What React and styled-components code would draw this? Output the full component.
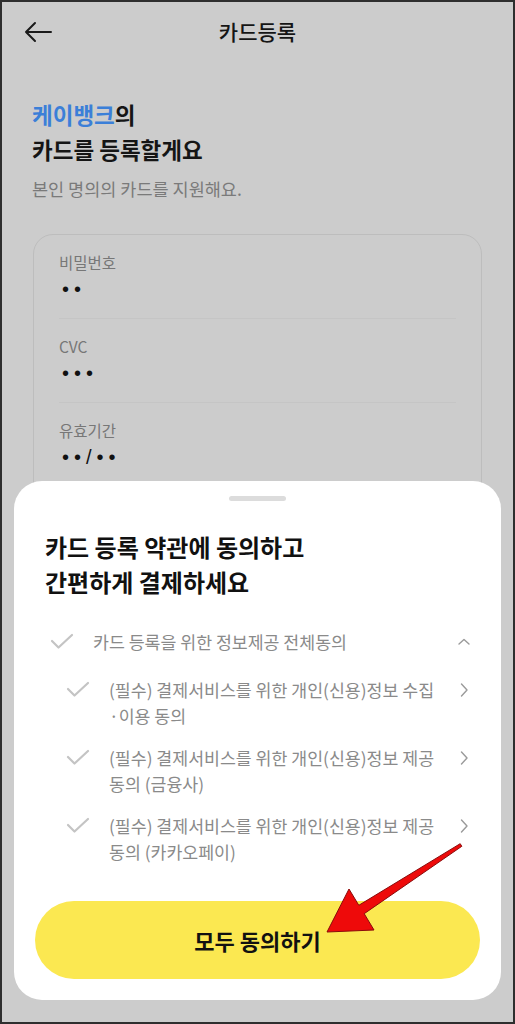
import styled, { createGlobalStyle } from "styled-components";

const GlobalStyle = createGlobalStyle`
  * { box-sizing: border-box; }
  html, body { margin: 0; padding: 0; background: #cccccc; }
  body {
    font-family: "Noto Sans CJK KR", "Noto Sans", sans-serif;
    -webkit-font-smoothing: antialiased;
  }
`;

const Frame = styled.div`
  position: relative;
  width: 515px;
  height: 1024px;
  overflow: hidden;
  background: #cccccc;
  border: 2px solid #2e2e2e;
`;

const Header = styled.header`
  position: relative;
  height: 58px;
  display: flex;
  align-items: center;
  justify-content: center;
`;

const BackButton = styled.button`
  position: absolute;
  left: 20px;
  top: 15px;
  width: 32px;
  height: 30px;
  padding: 0;
  border: 0;
  background: none;
  display: flex;
  align-items: center;
  justify-content: center;
`;

const HeaderTitle = styled.h1`
  margin: 0;
  font-size: 21px;
  font-weight: 500;
  color: #151515;
`;

const Intro = styled.section`
  padding: 37px 30px 0;
`;

const Heading = styled.h2`
  margin: 0;
  font-size: 22.5px;
  line-height: 35px;
  font-weight: 700;
  color: #151515;
`;

const Bank = styled.span`
  color: #3b7fd8;
`;

const Sub = styled.p`
  margin: 11px 0 0;
  font-size: 17.5px;
  line-height: 22px;
  color: #7a7a7a;
`;

const CardBox = styled.div`
  margin: 34px 31px 0 31px;
  border: 1px solid #bdbdbd;
  border-radius: 20px;
  padding: 0 25px 120px;
`;

const Field = styled.div`
  padding: 17px 0 19px;
  border-bottom: 1px solid ${({ last }) => (last ? "transparent" : "#c5c5c5")};
`;

const FieldLabel = styled.div`
  font-size: 15.5px;
  line-height: 20px;
  color: #777;
`;

const FieldValue = styled.div`
  margin-top: 7px;
  padding-left: 3px;
  font-family: "Liberation Sans", sans-serif;
  font-size: 20px;
  line-height: 20px;
  letter-spacing: 5px;
  color: #111;
`;

const Sheet = styled.div`
  position: absolute;
  left: 12px;
  right: 12px;
  bottom: 22px;
  height: 519px;
  background: #fff;
  border-radius: 28px;
  padding: 15px 20px 21px;
  display: flex;
  flex-direction: column;
`;

const Handle = styled.div`
  align-self: center;
  width: 57px;
  height: 5px;
  border-radius: 3px;
  background: #dcdcdc;
`;

const SheetTitle = styled.h3`
  margin: 28px 0 0 11px;
  font-size: 24px;
  line-height: 35px;
  font-weight: 700;
  color: #111;
`;

const Terms = styled.div`
  margin-top: ${({ top }) => top}px;
  display: flex;
  flex-direction: column;
  gap: ${({ gap }) => gap}px;
`;

const Row = styled.div`
  display: flex;
  align-items: flex-start;
  padding-left: ${({ indent }) => indent}px;
  padding-right: 8px;
`;

const CheckWrap = styled.span`
  flex: 0 0 24px;
  height: 26px;
  display: flex;
  align-items: center;
  margin-right: 19px;
`;

const RowText = styled.div`
  flex: 1;
  font-size: 17.3px;
  line-height: 26px;
  color: #8a8a8a;
  white-space: nowrap;
`;

const Chevron = styled.span`
  flex: 0 0 18px;
  height: 26px;
  display: flex;
  align-items: center;
  justify-content: center;
  margin-left: 10px;
`;

const AgreeButton = styled.button`
  margin-top: auto;
  height: 78px;
  width: 445px;
  align-self: center;
  border: 0;
  border-radius: 39px;
  background: #fbe851;
  font-family: "Noto Sans CJK KR", "Noto Sans", sans-serif;
  font-size: 22px;
  font-weight: 700;
  color: #111;
`;

const Annotation = styled.svg`
  position: absolute;
  left: 0;
  top: 0;
  pointer-events: none;
`;

const Check = () => (
  <svg width="24" height="18" viewBox="0 0 24 18">
    <polyline points="2,8 8.5,14.5 22,2" fill="none" stroke="#c4c4c4" strokeWidth="2.2" strokeLinecap="round" strokeLinejoin="round" />
  </svg>
);

const ChevronRight = () => (
  <svg width="10" height="16" viewBox="0 0 10 16">
    <polyline points="2.5,2 8,8 2.5,14" fill="none" stroke="#9a9a9a" strokeWidth="1.4" strokeLinecap="round" strokeLinejoin="round" />
  </svg>
);

const ChevronUp = () => (
  <svg width="14" height="10" viewBox="0 0 14 10">
    <polyline points="2,7 7,2.5 12,7" fill="none" stroke="#9a9a9a" strokeWidth="1.4" strokeLinecap="round" strokeLinejoin="round" />
  </svg>
);

const terms = [
  ["(필수) 결제서비스를 위한 개인(신용)정보 수집", "·이용 동의"],
  ["(필수) 결제서비스를 위한 개인(신용)정보 제공", "동의 (금융사)"],
  ["(필수) 결제서비스를 위한 개인(신용)정보 제공", "동의 (카카오페이)"],
];

const App = () => {
  return (
    <>
      <GlobalStyle />
      <Frame>
        <Header>
          <BackButton aria-label="뒤로">
            <svg width="28" height="22" viewBox="0 0 28 22">
              <path d="M27 11H2M11 2L2 11l9 9" fill="none" stroke="#1a1a1a" strokeWidth="2" strokeLinecap="round" strokeLinejoin="round" />
            </svg>
          </BackButton>
          <HeaderTitle>카드등록</HeaderTitle>
        </Header>

        <Intro>
          <Heading>
            <Bank>케이뱅크</Bank>의
            <br />
            카드를 등록할게요
          </Heading>
          <Sub>본인 명의의 카드를 지원해요.</Sub>
        </Intro>

        <CardBox>
          <Field>
            <FieldLabel>비밀번호</FieldLabel>
            <FieldValue>••</FieldValue>
          </Field>
          <Field>
            <FieldLabel>CVC</FieldLabel>
            <FieldValue>•••</FieldValue>
          </Field>
          <Field last>
            <FieldLabel>유효기간</FieldLabel>
            <FieldValue>••/••</FieldValue>
          </Field>
        </CardBox>

        <Sheet>
          <Handle />
          <SheetTitle>
            카드 등록 약관에 동의하고
            <br />
            간편하게 결제하세요
          </SheetTitle>
          <Terms top={30} gap={22}>
            <Row indent={16}>
              <CheckWrap><Check /></CheckWrap>
              <RowText>카드 등록을 위한 정보제공 전체동의</RowText>
              <Chevron><ChevronUp /></Chevron>
            </Row>
            <Terms top={0} gap={16}>
              {terms.map(([a, b]) => (
                <Row indent={32} key={b}>
                  <CheckWrap><Check /></CheckWrap>
                  <RowText>
                    {a}
                    <br />
                    {b}
                  </RowText>
                  <Chevron><ChevronRight /></Chevron>
                </Row>
              ))}
            </Terms>
          </Terms>
          <AgreeButton>모두 동의하기</AgreeButton>
        </Sheet>

        <Annotation width="515" height="1024" viewBox="0 0 515 1024">
          <polygon
            points="458.2,841.7 459.8,844.3 362.2,911.7 372,928 325,930 347,887 356.8,903.3"
            fill="#ee0a0a"
            stroke="#8a0b0b"
            strokeWidth="1"
            strokeLinejoin="round"
          />
        </Annotation>
      </Frame>
    </>
  );
};

export default App;
